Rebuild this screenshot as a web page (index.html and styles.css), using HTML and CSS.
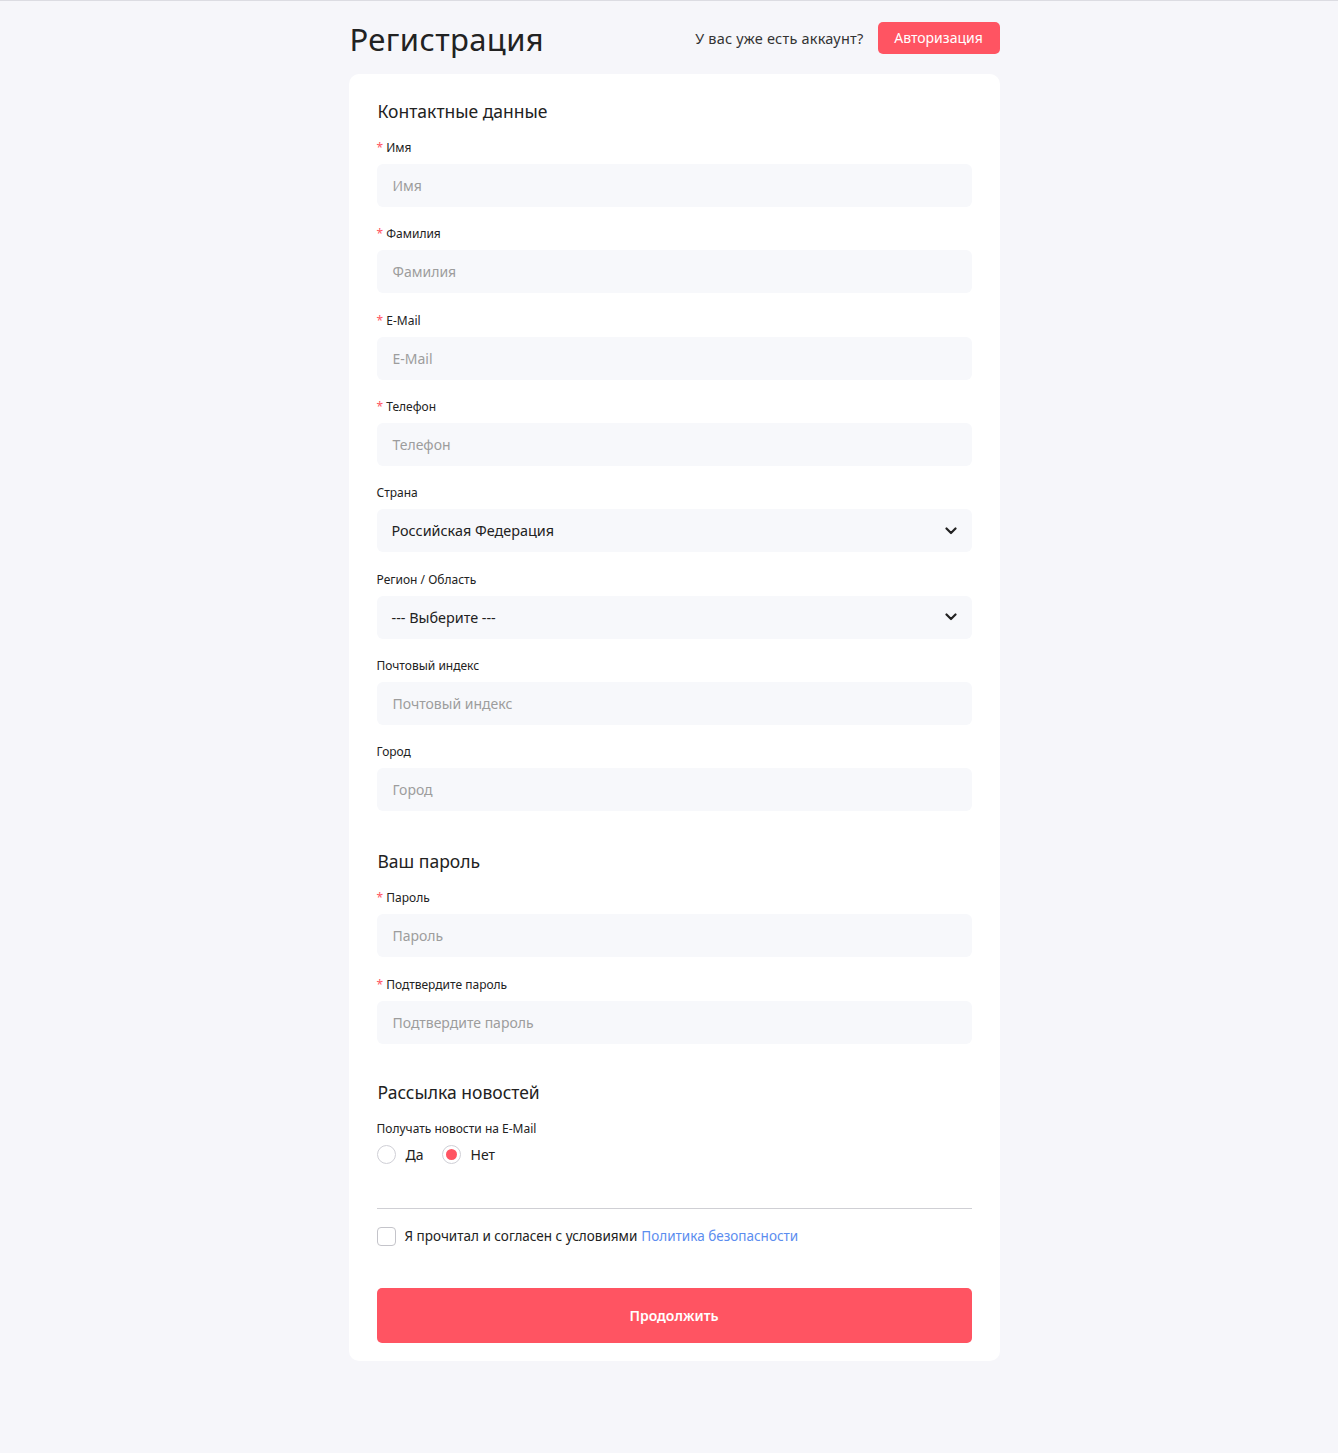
FILE: index.html
```html
<!DOCTYPE html>
<html lang="ru">
<head>
<meta charset="utf-8">
<title>Регистрация</title>
<link rel="stylesheet" href="styles.css">
</head>
<body>
<div class="page">
  <div class="header">
    <h1 class="title">Регистрация</h1>
    <div class="login">
      <span class="login-text">У вас уже есть аккаунт?</span>
      <a class="btn-login" href="#">Авторизация</a>
    </div>
  </div>
  <div class="card">
    <h2 class="section">Контактные данные</h2>
    <div class="field"><label class="label req">Имя</label><div class="input ph">Имя</div></div>
    <div class="field"><label class="label req">Фамилия</label><div class="input ph">Фамилия</div></div>
    <div class="field"><label class="label req">E-Mail</label><div class="input ph">E-Mail</div></div>
    <div class="field"><label class="label req">Телефон</label><div class="input ph">Телефон</div></div>
    <div class="field"><label class="label">Страна</label><div class="input select">Российская Федерация<svg class="chev" width="12" height="8" viewBox="0 0 12 8"><path d="M1.5 1.5 L6 6 L10.5 1.5" fill="none" stroke="#222" stroke-width="2.2" stroke-linecap="round" stroke-linejoin="round"/></svg></div></div>
    <div class="field"><label class="label">Регион / Область</label><div class="input select">--- Выберите ---<svg class="chev" width="12" height="8" viewBox="0 0 12 8"><path d="M1.5 1.5 L6 6 L10.5 1.5" fill="none" stroke="#222" stroke-width="2.2" stroke-linecap="round" stroke-linejoin="round"/></svg></div></div>
    <div class="field"><label class="label">Почтовый индекс</label><div class="input ph">Почтовый индекс</div></div>
    <div class="field"><label class="label">Город</label><div class="input ph">Город</div></div>

    <h2 class="section sec-gap">Ваш пароль</h2>
    <div class="field"><label class="label req">Пароль</label><div class="input ph">Пароль</div></div>
    <div class="field"><label class="label req">Подтвердите пароль</label><div class="input ph">Подтвердите пароль</div></div>

    <h2 class="section sec-gap-news">Рассылка новостей</h2>
    <div class="label">Получать новости на E-Mail</div>
    <div class="radios">
      <span class="radio-item"><span class="radio"></span>Да</span>
      <span class="radio-item"><span class="radio checked"></span>Нет</span>
    </div>
    <div class="divider"></div>
    <div class="agree"><span class="checkbox"></span>Я прочитал и согласен с условиями <a class="link" href="#">Политика безопасности</a></div>
    <button class="btn-submit">Продолжить</button>
  </div>
</div>
</body>
</html>
```
FILE: styles.css
```css
* { box-sizing: border-box; }
html, body { margin: 0; padding: 0; }
body {
  background: #f6f6fa;
  border-top: 1px solid #dcdce2;
  font-family: "Noto Sans", "Open Sans", sans-serif;
  color: #222;
  min-height: 1453px;
}
.page {
  width: 651px;
  margin: 0 auto;
  padding-top: 21px;
  position: relative;
  left: 5px;
}
.header {
  display: flex;
  justify-content: space-between;
  align-items: center;
  height: 32px;
  margin-bottom: 20px;
}
.title {
  margin: 0;
  font-size: 31px;
  font-weight: 400;
  color: #222;
  letter-spacing: 0.4px;
  line-height: 32px;
  padding-top: 2px;
  padding-left: 1px;
}
.login { display: flex; align-items: center; gap: 14px; }
.login-text { font-size: 14.5px; color: #333; letter-spacing: 0.2px; }
.btn-login {
  display: inline-block;
  background: #ff5462;
  color: #fff;
  text-decoration: none;
  font-size: 14px;
  height: 32px;
  line-height: 32px;
  padding: 0 15px;
  border-radius: 5px;
  width: 122px;
  text-align: center;
}
.card {
  background: #fff;
  border-radius: 10px;
  padding: 26px 28px 18px 28px;
}
.section {
  margin: 0 0 18px;
  font-size: 17.5px;
  font-weight: 400;
  line-height: 22px;
  color: #222;
  padding-left: 1px;
}
.sec-gap { margin-top: 39px; }
.sec-gap-news { margin-top: 37px; }
.field { margin-bottom: 19.33px; }
.label {
  display: block;
  font-size: 12px;
  line-height: 16px;
  color: #222;
  margin-bottom: 8px;
}
.req::before {
  content: "* ";
  color: #ff5462;
}
.input {
  height: 43px;
  background: #f7f8fb;
  border-radius: 6px;
  display: flex;
  align-items: center;
  padding: 0 15px 0 16px;
  font-size: 14px;
  color: #222;
}
.input.ph { color: #9d9d9d; }
.select { justify-content: space-between; padding-right: 15px; padding-left: 15px; font-size: 14.4px; }
.chev { display: block; }
.radios { display: flex; gap: 18px; margin-top: 1px; }
.radio-item { display: flex; align-items: center; gap: 10px; font-size: 14px; }
.radio {
  width: 19px; height: 19px;
  border-radius: 50%;
  border: 1px solid #cfcfd6;
  display: flex; align-items: center; justify-content: center;
  background: #fff;
}
.radio.checked::after {
  content: "";
  width: 11px; height: 11px;
  border-radius: 50%;
  background: #ff5462;
}
.divider {
  border-top: 1px solid #cfcfd4;
  margin-top: 44px;
}
.agree {
  display: flex;
  align-items: center;
  margin-top: 18px;
  font-size: 13.5px;
  line-height: 19px;
}
.checkbox {
  width: 19px; height: 19px;
  border: 1px solid #c4c4ca;
  border-radius: 4px;
  margin-right: 9px;
}
.link { color: #5b8def; text-decoration: none; margin-left: 4px; }
.btn-submit {
  display: block;
  width: 100%;
  height: 55px;
  margin-top: 42px;
  border: 0;
  border-radius: 5px;
  background: #ff5462;
  color: #fff;
  font-family: inherit;
  font-size: 14px;
  font-weight: 600;
}
```
